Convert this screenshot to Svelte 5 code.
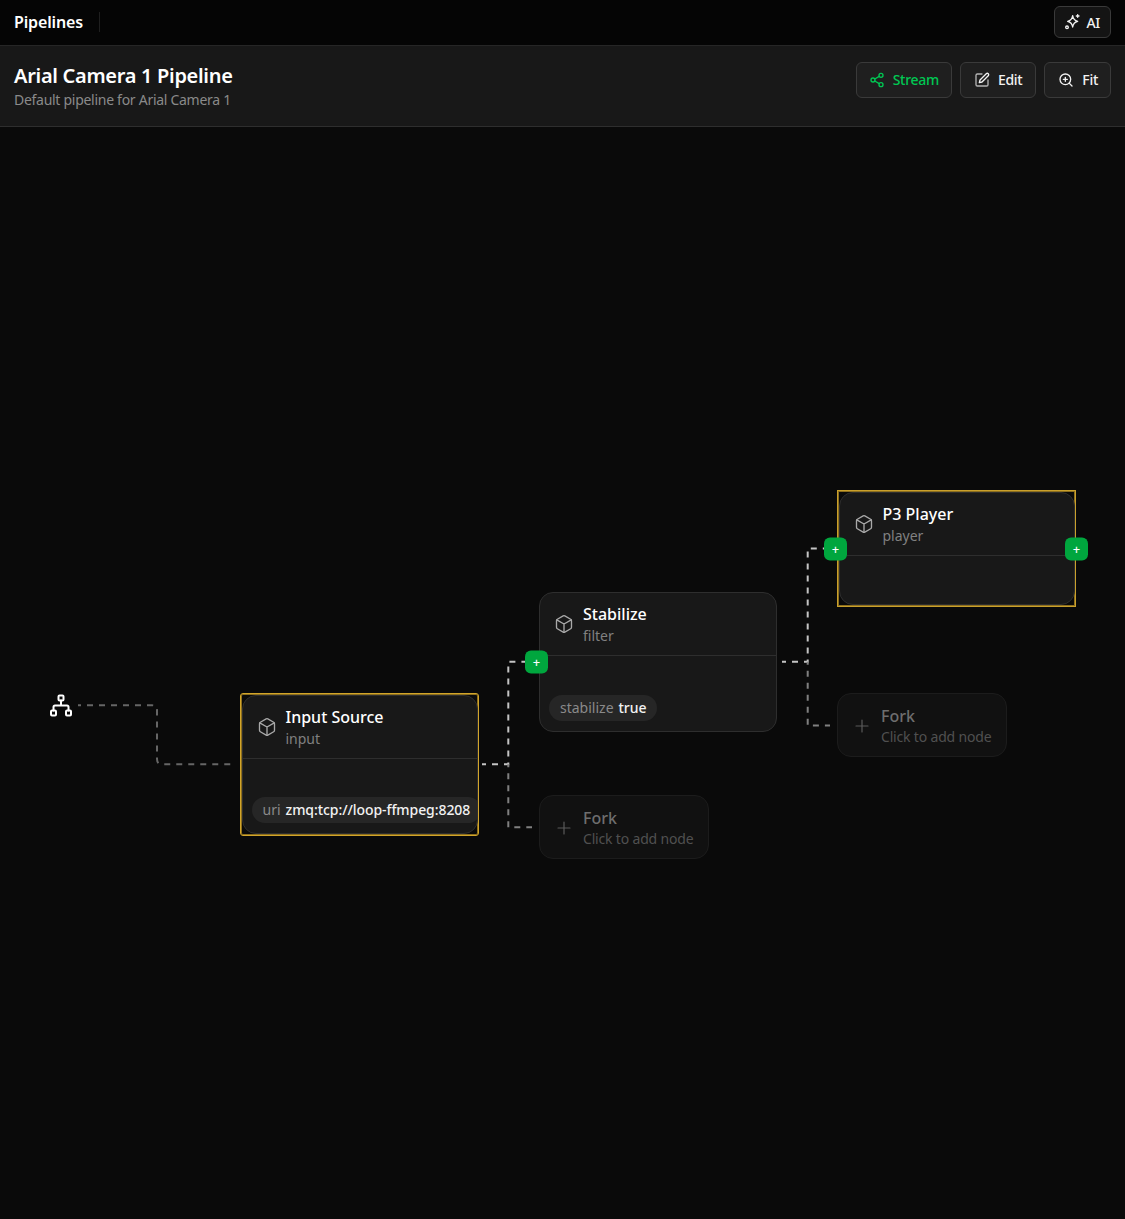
<script>
    // node positions are relative to the canvas (it starts at y=127)
    const nodes = [
        { id: 'input', title: 'Input Source', type: 'input', x: 240, y: 566, w: 239, h: 143, selected: true, param: ['uri', 'zmq:tcp://loop-ffmpeg:8208'] },
        { id: 'filter', title: 'Stabilize', type: 'filter', x: 539, y: 465, w: 238, h: 140, param: ['stabilize', 'true'], left: true },
        { id: 'player', title: 'P3 Player', type: 'player', x: 837, y: 363, w: 239, h: 117, selected: true, square: true, left: true, right: true }
    ];

    const forks = [
        { x: 539, y: 668 },
        { x: 837, y: 566 }
    ];

    const edges = [
        { d: 'M78 578.300H152Q157 578.300 157 583.300V632Q157 637.300 162 637.300H236', color: '#666', offset: 3 },
        { d: 'M482 637.300H508.300V534.700H526', color: '#c4c4c4', offset: 2 },
        { d: 'M508.300 637.300V700.300H532', color: '#808080', offset: 3 },
        { d: 'M782 534.700H807.700V421.500H826', color: '#c4c4c4', offset: 2 },
        { d: 'M807.700 534.700V598.500H830', color: '#808080', offset: 3 }
    ];
</script>

<div class="page">
    <div class="topbar">
        <div class="crumbs">
            <span class="crumb">Pipelines</span>
            <span class="divider"></span>
        </div>
        <button class="btn ai">
            <svg viewBox="0 0 24 24" width="16" height="16" fill="none" stroke="currentColor" stroke-width="2" stroke-linecap="round" stroke-linejoin="round">
                <path d="M13 2.500Q14 9.500 20.500 11Q14 12.500 13 19.500Q12 12.500 5.500 11Q12 9.500 13 2.500z"/>
                <path d="M20.500 1v4M18.500 3h4"/>
                <circle cx="4.500" cy="20" r="2"/>
            </svg>
            AI
        </button>
    </div>

    <div class="header">
        <div class="titles">
            <h1>Arial Camera 1 Pipeline</h1>
            <p>Default pipeline for Arial Camera 1</p>
        </div>
        <div class="actions">
            <button class="btn stream">
                <svg viewBox="0 0 24 24" width="16" height="16" fill="none" stroke="currentColor" stroke-width="2" stroke-linecap="round" stroke-linejoin="round">
                    <circle cx="18" cy="5" r="3"/><circle cx="6" cy="12" r="3"/><circle cx="18" cy="19" r="3"/>
                    <path d="M8.590 13.510l6.830 3.980M15.410 6.510l-6.820 3.980"/>
                </svg>
                <span>Stream</span>
            </button>
            <button class="btn">
                <svg viewBox="0 0 24 24" width="16" height="16" fill="none" stroke="currentColor" stroke-width="2" stroke-linecap="round" stroke-linejoin="round">
                    <path d="M12 3H5a2 2 0 0 0-2 2v14a2 2 0 0 0 2 2h14a2 2 0 0 0 2-2v-7" stroke="#b5b5b5"/>
                    <path d="M18.400 2.600a2.100 2.100 0 0 1 3 3L12 15l-4 1 1-4z"/>
                </svg>
                <span>Edit</span>
            </button>
            <button class="btn fit">
                <svg viewBox="0 0 24 24" width="16" height="16" fill="none" stroke="currentColor" stroke-width="2" stroke-linecap="round" stroke-linejoin="round">
                    <circle cx="11" cy="11" r="8"/><path d="M21 21l-4.300-4.300M11 8v6M8 11h6"/>
                </svg>
                <span>Fit</span>
            </button>
        </div>
    </div>

    <div class="canvas">
        <svg class="edges" width="1125" height="1092">
            {#each edges as edge}
                <path d={edge.d} fill="none" stroke={edge.color} stroke-width="2" stroke-dasharray="6 6" stroke-dashoffset={edge.offset} />
            {/each}
        </svg>

        <svg class="root" viewBox="0 0 24 24" width="24" height="24" fill="none" stroke="#fff" stroke-width="2" stroke-linecap="round" stroke-linejoin="round">
            <rect x="9.500" y="1.500" width="5" height="5" rx="1"/>
            <rect x="2" y="16.500" width="5" height="5" rx="1"/>
            <rect x="17" y="16.500" width="5" height="5" rx="1"/>
            <path d="M4.500 16.500V13a1.500 1.500 0 0 1 1.500-1.500h12a1.500 1.500 0 0 1 1.500 1.500v3.500M12 6.500v5"/>
        </svg>

        {#each nodes as node (node.id)}
            <div class="frame" class:selected={node.selected} class:square={node.square}
                style="left: {node.x}px; top: {node.y}px; width: {node.w}px; height: {node.h}px;">
                <div class="node">
                    <div class="node-head">
                        <svg class="cube" viewBox="0 0 24 24" width="20" height="20" fill="none" stroke="currentColor" stroke-width="1.600" stroke-linecap="round" stroke-linejoin="round">
                            <path d="M21 8a2 2 0 0 0-1-1.730l-7-4a2 2 0 0 0-2 0l-7 4A2 2 0 0 0 3 8v8a2 2 0 0 0 1 1.730l7 4a2 2 0 0 0 2 0l7-4A2 2 0 0 0 21 16z"/>
                            <path d="M3.300 7L12 12l8.700-5M12 22V12"/>
                        </svg>
                        <div class="node-text">
                            <div class="node-title">{node.title}</div>
                            <div class="node-type">{node.type}</div>
                        </div>
                    </div>
                    <div class="node-body">
                        {#if node.param}
                            <div class="chip"><span class="key">{node.param[0]}</span> <span class="val">{node.param[1]}</span></div>
                        {/if}
                    </div>
                </div>
                {#if node.left}<span class="port port-left">+</span>{/if}
                {#if node.right}<span class="port port-right">+</span>{/if}
            </div>
        {/each}

        {#each forks as fork}
            <div class="fork" style="left: {fork.x}px; top: {fork.y}px;">
                <svg viewBox="0 0 24 24" width="16" height="16" fill="none" stroke="currentColor" stroke-width="1.800" stroke-linecap="round">
                    <path d="M12 3v18M3 12h18"/>
                </svg>
                <div>
                    <div class="fork-title">Fork</div>
                    <div class="fork-sub">Click to add node</div>
                </div>
            </div>
        {/each}
    </div>
</div>

<style>
    :global(body) {
        margin: 0;
        background: #0a0a0a;
    }

    .page {
        width: 1125px;
        height: 1219px;
        display: flex;
        flex-direction: column;
        overflow: hidden;
        font-family: "Noto Sans", sans-serif;
        color: #fff;
    }

    .topbar {
        height: 46px;
        flex: none;
        display: flex;
        align-items: flex-start;
        justify-content: space-between;
        padding: 6px 14px 0;
        box-sizing: border-box;
        background: #050505;
        border-bottom: 1px solid #262626;
    }

    .crumbs {
        display: flex;
        align-items: center;
        gap: 16px;
        height: 32px;
    }

    .crumb {
        font-size: 16px;
        letter-spacing: -0.15px;
        font-weight: 600;
    }

    .divider {
        width: 1px;
        height: 20px;
        background: #1f1f1f;
    }

    .header {
        height: 81px;
        flex: none;
        box-sizing: border-box;
        display: flex;
        align-items: flex-start;
        justify-content: space-between;
        padding: 16px 14px 0;
        background: #181818;
        border-bottom: 1px solid #2e2e2e;
    }

    h1 {
        margin: 0;
        font-size: 20px;
        letter-spacing: -0.3px;
        line-height: 28px;
        font-weight: 600;
    }

    .titles p {
        margin: 0;
        font-size: 14px;
        letter-spacing: -0.28px;
        line-height: 20px;
        color: #8a8a8a;
    }

    .actions {
        display: flex;
        gap: 8px;
    }

    .btn {
        display: flex;
        align-items: center;
        gap: 8px;
        height: 36px;
        padding: 0 13px;
        border: 1px solid #3a3a3a;
        border-radius: 6px;
        background: #1f1f1f;
        color: #f2f2f2;
        font: 500 14px "Noto Sans", sans-serif;
        letter-spacing: -0.3px;
    }

    .btn svg {
        flex: none;
    }

    .btn span {
        margin-top: -2px;
    }

    .btn.stream {
        padding: 0 12px;
        color: #00c853;
    }

    .btn.fit {
        padding: 0 12px 0 13px;
    }

    .btn.ai {
        height: 32px;
        padding: 0 10px 0 9px;
        gap: 6px;
        background: #141414;
    }

    .canvas {
        position: relative;
        flex: 1;
        background: #0a0a0a;
    }

    .edges {
        position: absolute;
        left: 0;
        top: 0;
    }

    .root {
        position: absolute;
        left: 49px;
        top: 567px;
    }

    .frame {
        position: absolute;
        box-sizing: border-box;
    }

    .frame.selected {
        border: 1px solid #d2a52a;
        padding: 1px 0.5px;
        border-radius: 3px;
        box-shadow: inset 0 0 0 1px rgba(210, 165, 42, 0.65);
    }

    .frame.square {
        border-radius: 0;
        border-color: #c9a02c;
    }

    .node {
        box-sizing: border-box;
        height: 100%;
        display: flex;
        flex-direction: column;
        background: #181818;
        border: 1px solid #2e2e2e;
        border-radius: 14px;
        overflow: hidden;
    }

    .node-head {
        height: 63px;
        flex: none;
        box-sizing: border-box;
        display: flex;
        align-items: center;
        gap: 9px;
        padding: 0 14px;
        border-bottom: 1px solid #2e2e2e;
    }

    .cube {
        flex: none;
        color: #a8a8a8;
    }

    .node-title {
        font-size: 16px;
        line-height: 22px;
        font-weight: 500;
    }

    .node-type {
        font-size: 14px;
        line-height: 21px;
        color: #808080;
    }

    .node-body {
        flex: 1;
        display: flex;
        align-items: flex-end;
        padding: 0 0 10px 9px;
    }

    .chip {
        box-sizing: border-box;
        height: 26px;
        display: flex;
        align-items: center;
        gap: 5px;
        padding: 0 11px 2px;
        border-radius: 13px;
        background: #262626;
        font-size: 14px;
        white-space: nowrap;
    }

    .key {
        color: #8a8a8a;
    }

    .val {
        color: #f2f2f2;
        font-weight: 500;
        letter-spacing: -0.07px;
    }

    .port {
        position: absolute;
        top: 50%;
        transform: translateY(-50%);
        width: 23px;
        height: 23px;
        display: flex;
        align-items: center;
        justify-content: center;
        border-radius: 6px;
        background: #00a63e;
        color: #fff;
        font: 500 13px/1 "Noto Sans", sans-serif;
    }

    .port-left {
        left: -14px;
    }

    .port-right {
        right: -13px;
    }

    .fork {
        position: absolute;
        box-sizing: border-box;
        width: 170px;
        height: 64px;
        display: flex;
        align-items: center;
        gap: 11px;
        padding: 2px 16px 0;
        background: #111;
        border: 1px solid #1c1c1c;
        border-radius: 14px;
        color: #5a5a5a;
    }

    .fork svg {
        flex: none;
    }

    .fork-title {
        font-size: 16px;
        line-height: 22px;
        font-weight: 500;
        color: #6e6e6e;
    }

    .fork-sub {
        font-size: 14px;
        letter-spacing: -0.18px;
        line-height: 20px;
        color: #505050;
        white-space: nowrap;
    }
</style>
